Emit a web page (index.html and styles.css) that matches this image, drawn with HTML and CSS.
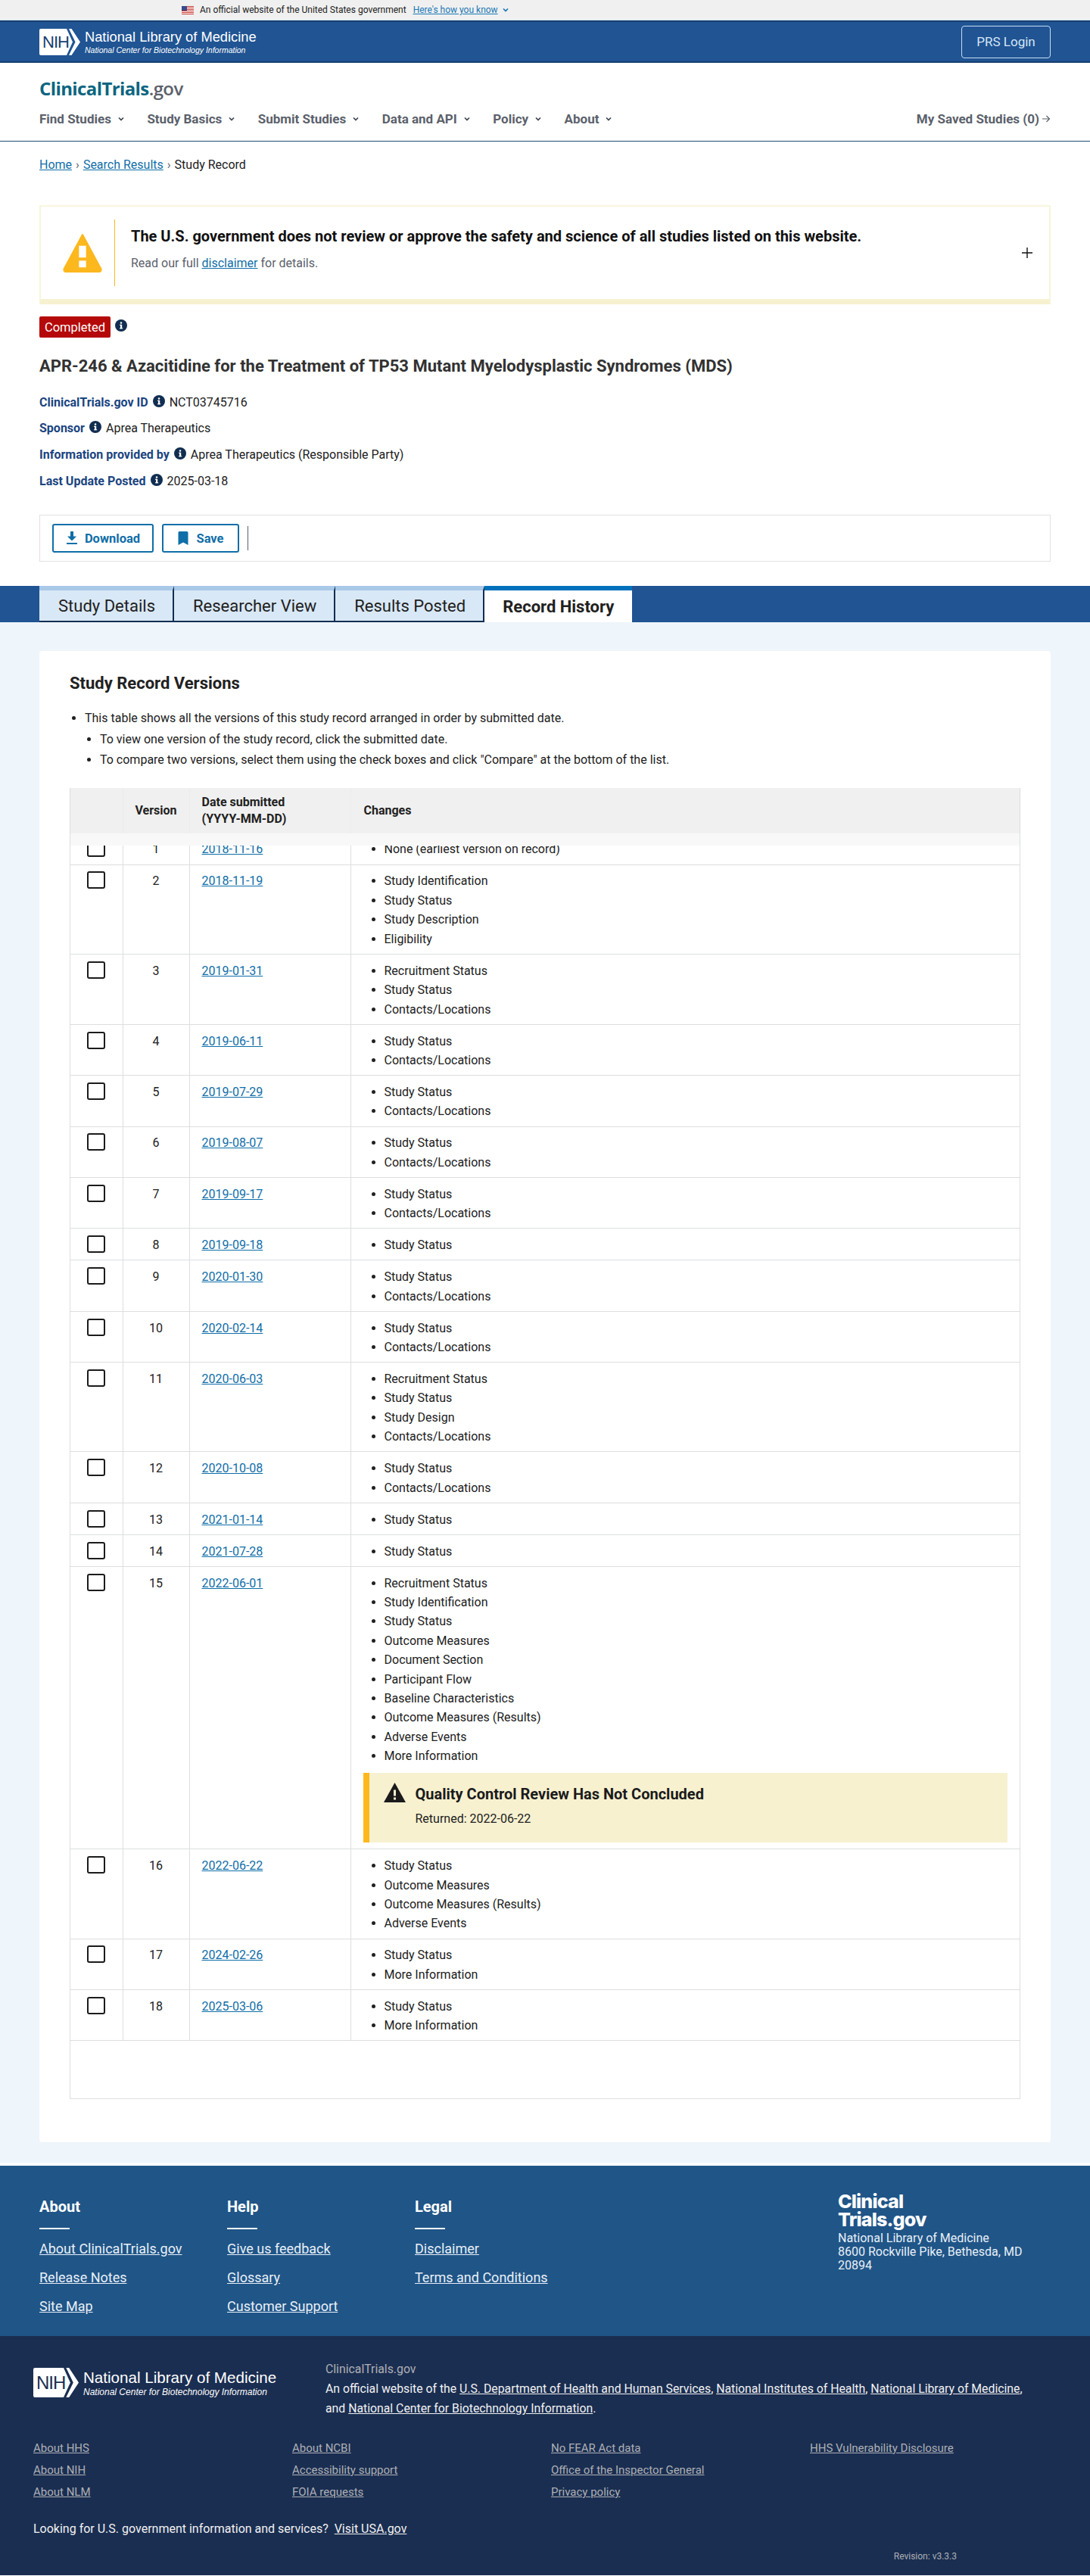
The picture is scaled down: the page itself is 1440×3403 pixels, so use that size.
FILE: index.html
```html
<!DOCTYPE html>
<html lang="en">
<head>
<meta charset="utf-8">
<title>Record History | ClinicalTrials.gov</title>
<link rel="stylesheet" href="styles.css">
</head>
<body>
<svg class="sprite" width="0" height="0" aria-hidden="true">
  <symbol id="info" viewBox="0 0 16 16"><circle cx="8" cy="8" r="8" fill="#112e51"/><rect x="7" y="6.8" width="2.2" height="5.4" fill="#fff"/><rect x="6" y="6.8" width="2" height="1.1" fill="#fff"/><rect x="6" y="11.2" width="4.2" height="1.1" fill="#fff"/><circle cx="8" cy="4.6" r="1.25" fill="#fff"/></symbol>
  <symbol id="chev" viewBox="0 0 10 10"><path d="M2 3.5 5 6.5 8 3.5" fill="none" stroke="currentColor" stroke-width="1.7"/></symbol>
  <symbol id="nih" viewBox="0 0 54 35"><path d="M2 0H36L44 17.5 36 35H2A2 2 0 0 1 0 33V2A2 2 0 0 1 2 0Z" fill="#fff"/><path d="M39 0H42.5L54 17.5 42.5 35H39L47.5 17.5Z" fill="#fff"/></symbol>
</svg>

<div class="gov-banner">
  <svg class="flag" viewBox="0 0 16 11"><rect width="16" height="11" fill="#fff"/><path d="M0 .5H16M0 2.5H16M0 4.5H16M0 6.5H16M0 8.5H16M0 10.5H16" stroke="#c8362e" stroke-width="1"/><rect width="7" height="6" fill="#3c4a8c"/></svg>
  <span class="gov-text">An official website of the United States government</span>
  <a class="gov-link" href="#">Here's how you know</a>
  <svg class="gov-chev"><use href="#chev"/></svg>
</div>

<div class="nih-bar">
  <a class="nih-logo" href="#">
    <span class="nih-mark"><svg class="nih-svg"><use href="#nih"/></svg><span class="nih-letters">NIH</span></span>
    <span class="nih-words"><span class="nih-title">National Library of Medicine</span><span class="nih-sub">National Center for Biotechnology Information</span></span>
  </a>
  <a class="prs" href="#">PRS Login</a>
</div>

<header class="site-head">
  <div class="site-logo"><span class="logo-main">ClinicalTrials</span><span class="logo-gov">.gov</span></div>
  <nav class="site-nav">
    <a class="nav-item" href="#">Find Studies<svg class="nav-chev"><use href="#chev"/></svg></a>
    <a class="nav-item" href="#">Study Basics<svg class="nav-chev"><use href="#chev"/></svg></a>
    <a class="nav-item" href="#">Submit Studies<svg class="nav-chev"><use href="#chev"/></svg></a>
    <a class="nav-item" href="#">Data and API<svg class="nav-chev"><use href="#chev"/></svg></a>
    <a class="nav-item" href="#">Policy<svg class="nav-chev"><use href="#chev"/></svg></a>
    <a class="nav-item" href="#">About<svg class="nav-chev"><use href="#chev"/></svg></a>
    <a class="nav-saved" href="#">My Saved Studies (0)<svg class="arrow" viewBox="0 0 12 12"><path d="M1 6H10.5M6.5 2 10.5 6 6.5 10" fill="none" stroke="currentColor" stroke-width="1.2"/></svg></a>
  </nav>
</header>

<div class="study-top">
  <div class="crumbs"><a href="#">Home</a><span class="sep">›</span><a href="#">Search Results</a><span class="sep">›</span><span>Study Record</span></div>

  <section class="notice">
    <svg class="notice-icon" viewBox="0 0 52 52"><path d="M26 3 49.5 46.5A2.5 2.5 0 0 1 47.500 50H4.500A2.500 2.500 0 0 1 2.500 46.500Z" fill="#fdb81e" stroke="#fdb81e" stroke-width="2" stroke-linejoin="round"/><rect x="21.500" y="17" width="9" height="15" fill="#fff"/><rect x="21.500" y="36" width="9" height="8.500" fill="#fff"/></svg>
    <div class="notice-body">
      <div class="notice-title">The U.S. government does not review or approve the safety and science of all studies listed on this website.</div>
      <div class="notice-sub">Read our full <a href="#">disclaimer</a> for details.</div>
    </div>
    <svg class="plus" viewBox="0 0 14 14"><path d="M7 0V14M0 7H14" stroke="#111" stroke-width="1.4"/></svg>
  </section>

  <div class="status-row"><span class="badge">Completed</span><svg class="info"><use href="#info"/></svg></div>
  <h1 class="study-title">APR-246 &amp; Azacitidine for the Treatment of TP53 Mutant Myelodysplastic Syndromes (MDS)</h1>
  <dl class="meta">
    <div class="meta-row"><dt>ClinicalTrials.gov ID</dt><svg class="info"><use href="#info"/></svg><dd>NCT03745716</dd></div>
    <div class="meta-row"><dt>Sponsor</dt><svg class="info"><use href="#info"/></svg><dd>Aprea Therapeutics</dd></div>
    <div class="meta-row"><dt>Information provided by</dt><svg class="info"><use href="#info"/></svg><dd>Aprea Therapeutics (Responsible Party)</dd></div>
    <div class="meta-row"><dt>Last Update Posted</dt><svg class="info"><use href="#info"/></svg><dd>2025-03-18</dd></div>
  </dl>
  <div class="actions">
    <a class="btn btn-dl" href="#"><svg class="btn-icon" viewBox="0 0 16 18"><path d="M6 0H10V6.500H14L8 12.500 2 6.500H6Z" fill="currentColor"/><rect x="1" y="15" width="14" height="2" fill="currentColor"/></svg>Download</a>
    <a class="btn btn-save" href="#"><svg class="btn-icon" viewBox="0 0 16 18"><path d="M1.500 1.500A1.500 1.500 0 0 1 3 0H13A1.500 1.500 0 0 1 14.500 1.500V18L8 14.500 1.500 18Z" fill="currentColor"/></svg>Save</a>
    <span class="action-sep"></span>
  </div>
</div>

<div class="tabs-band">
  <div class="tabs">
    <a class="tab" href="#">Study Details</a>
    <a class="tab" href="#">Researcher View</a>
    <a class="tab" href="#">Results Posted</a>
    <a class="tab tab-active" href="#">Record History</a>
  </div>
</div>

<main class="main">
  <section class="card">
    <h2 class="card-title">Study Record Versions</h2>
    <ul class="intro">
      <li>This table shows all the versions of this study record arranged in order by submitted date.
        <ul>
          <li>To view one version of the study record, click the submitted date.</li>
          <li>To compare two versions, select them using the check boxes and click "Compare" at the bottom of the list.</li>
        </ul>
      </li>
    </ul>
    <div class="table-wrap">
      <div class="head-strip"></div>
      <table class="versions">
        <colgroup><col class="c-check"><col class="c-ver"><col class="c-date"><col></colgroup>
        <thead><tr><th></th><th class="center">Version</th><th>Date submitted<br>(YYYY-MM-DD)</th><th class="th-changes">Changes</th></tr></thead>
        <tbody>
          <tr><td><span class="check"></span></td><td class="center">1</td><td><a href="#">2018-11-16</a></td><td><ul><li>None (earliest version on record)</li></ul></td></tr>
          <tr><td><span class="check"></span></td><td class="center">2</td><td><a href="#">2018-11-19</a></td><td><ul><li>Study Identification</li><li>Study Status</li><li>Study Description</li><li>Eligibility</li></ul></td></tr>
          <tr><td><span class="check"></span></td><td class="center">3</td><td><a href="#">2019-01-31</a></td><td><ul><li>Recruitment Status</li><li>Study Status</li><li>Contacts/Locations</li></ul></td></tr>
          <tr><td><span class="check"></span></td><td class="center">4</td><td><a href="#">2019-06-11</a></td><td><ul><li>Study Status</li><li>Contacts/Locations</li></ul></td></tr>
          <tr><td><span class="check"></span></td><td class="center">5</td><td><a href="#">2019-07-29</a></td><td><ul><li>Study Status</li><li>Contacts/Locations</li></ul></td></tr>
          <tr><td><span class="check"></span></td><td class="center">6</td><td><a href="#">2019-08-07</a></td><td><ul><li>Study Status</li><li>Contacts/Locations</li></ul></td></tr>
          <tr><td><span class="check"></span></td><td class="center">7</td><td><a href="#">2019-09-17</a></td><td><ul><li>Study Status</li><li>Contacts/Locations</li></ul></td></tr>
          <tr><td><span class="check"></span></td><td class="center">8</td><td><a href="#">2019-09-18</a></td><td><ul><li>Study Status</li></ul></td></tr>
          <tr><td><span class="check"></span></td><td class="center">9</td><td><a href="#">2020-01-30</a></td><td><ul><li>Study Status</li><li>Contacts/Locations</li></ul></td></tr>
          <tr><td><span class="check"></span></td><td class="center">10</td><td><a href="#">2020-02-14</a></td><td><ul><li>Study Status</li><li>Contacts/Locations</li></ul></td></tr>
          <tr><td><span class="check"></span></td><td class="center">11</td><td><a href="#">2020-06-03</a></td><td><ul><li>Recruitment Status</li><li>Study Status</li><li>Study Design</li><li>Contacts/Locations</li></ul></td></tr>
          <tr><td><span class="check"></span></td><td class="center">12</td><td><a href="#">2020-10-08</a></td><td><ul><li>Study Status</li><li>Contacts/Locations</li></ul></td></tr>
          <tr><td><span class="check"></span></td><td class="center">13</td><td><a href="#">2021-01-14</a></td><td><ul><li>Study Status</li></ul></td></tr>
          <tr><td><span class="check"></span></td><td class="center">14</td><td><a href="#">2021-07-28</a></td><td><ul><li>Study Status</li></ul></td></tr>
          <tr><td><span class="check"></span></td><td class="center">15</td><td><a href="#">2022-06-01</a></td><td>
            <ul><li>Recruitment Status</li><li>Study Identification</li><li>Study Status</li><li>Outcome Measures</li><li>Document Section</li><li>Participant Flow</li><li>Baseline Characteristics</li><li>Outcome Measures (Results)</li><li>Adverse Events</li><li>More Information</li></ul>
            <div class="qc">
              <svg class="qc-icon" viewBox="0 0 29 26"><path d="M14.500 0 29 26H0Z" fill="#1b1b1b"/><rect x="13" y="9.500" width="3" height="8" fill="#f7f1d0"/><rect x="13" y="19.500" width="3" height="3" fill="#f7f1d0"/></svg>
              <div><div class="qc-title">Quality Control Review Has Not Concluded</div><div class="qc-sub">Returned: 2022-06-22</div></div>
            </div>
          </td></tr>
          <tr><td><span class="check"></span></td><td class="center">16</td><td><a href="#">2022-06-22</a></td><td><ul><li>Study Status</li><li>Outcome Measures</li><li>Outcome Measures (Results)</li><li>Adverse Events</li></ul></td></tr>
          <tr><td><span class="check"></span></td><td class="center">17</td><td><a href="#">2024-02-26</a></td><td><ul><li>Study Status</li><li>More Information</li></ul></td></tr>
          <tr><td><span class="check"></span></td><td class="center">18</td><td><a href="#">2025-03-06</a></td><td><ul><li>Study Status</li><li>More Information</li></ul></td></tr>
        </tbody>
      </table>
    </div>
  </section>
</main>

<footer>
  <div class="foot-top">
    <div class="foot-col"><h3>About</h3><a href="#">About ClinicalTrials.gov</a><a href="#">Release Notes</a><a href="#">Site Map</a></div>
    <div class="foot-col"><h3>Help</h3><a href="#">Give us feedback</a><a href="#">Glossary</a><a href="#">Customer Support</a></div>
    <div class="foot-col"><h3>Legal</h3><a href="#">Disclaimer</a><a href="#">Terms and Conditions</a></div>
    <div class="foot-brand">
      <div class="foot-logo">Clinical<br>Trials.gov</div>
      <address>National Library of Medicine<br>8600 Rockville Pike, Bethesda, MD<br>20894</address>
    </div>
  </div>
  <div class="foot-dark">
    <div class="foot-id">
      <a class="nih-logo nih-logo-lg" href="#">
        <span class="nih-mark"><svg class="nih-svg"><use href="#nih"/></svg><span class="nih-letters">NIH</span></span>
        <span class="nih-words"><span class="nih-title">National Library of Medicine</span><span class="nih-sub">National Center for Biotechnology Information</span></span>
      </a>
      <div class="foot-official">
        <div class="foot-name">ClinicalTrials.gov</div>
        An official website of the <a href="#">U.S. Department of Health and Human Services</a>, <a href="#">National Institutes of Health</a>, <a href="#">National Library of Medicine</a>, and <a href="#">National Center for Biotechnology Information</a>.
      </div>
    </div>
    <div class="foot-links">
      <a href="#">About HHS</a><a href="#">About NCBI</a><a href="#">No FEAR Act data</a><a href="#">HHS Vulnerability Disclosure</a>
      <a href="#">About NIH</a><a href="#">Accessibility support</a><a href="#">Office of the Inspector General</a><span></span>
      <a href="#">About NLM</a><a href="#">FOIA requests</a><a href="#">Privacy policy</a><span></span>
    </div>
    <div class="foot-usa">Looking for U.S. government information and services?&nbsp; <a href="#">Visit USA.gov</a></div>
    <div class="foot-rev">Revision: v3.3.3</div>
  </div>
</footer>
</body>
</html>
```
FILE: styles.css
```css
* { box-sizing: border-box; }
html, body { margin: 0; padding: 0; }
body { font-family: Roboto, "Liberation Sans", sans-serif; font-size: 16px; color: #212121; background: #fff; }
a { color: #0f6ea8; }
.sprite { position: absolute; }

.gov-banner { height: 27px; background: #f0f0f0; border-bottom: 1px solid #cfe2f0; display: flex; align-items: center; padding-left: 240px; font-size: 12px; color: #212121; }
.flag { width: 16px; height: 11px; margin-right: 8px; }
.gov-link { margin-left: 9px; color: #1a78b5; }
.gov-chev { width: 10px; height: 10px; margin-left: 5px; color: #1a78b5; }

.nih-bar { height: 56px; background: #205493; border-top: 2px solid #173f70; border-bottom: 2px solid #173f70; display: flex; align-items: center; justify-content: space-between; padding: 0 52px; }
.nih-logo { display: flex; align-items: center; text-decoration: none; color: #fff; }
.nih-mark { position: relative; display: block; width: 54px; height: 35px; }
.nih-svg { display: block; width: 100%; height: 100%; }
.nih-letters { position: absolute; left: 4px; top: 0; line-height: 35px; font-family: "Liberation Sans", sans-serif; font-size: 22px; letter-spacing: -1px; color: #173f70; }
.nih-words { display: flex; flex-direction: column; margin-left: 6px; font-family: "Liberation Sans", sans-serif; }
.nih-title { font-size: 18.300px; line-height: 22px; }
.nih-sub { font-size: 10.500px; line-height: 12px; font-style: italic; }
.prs { width: 118px; height: 43px; border: 1px solid #c6dcf2; border-radius: 4px; display: flex; align-items: center; justify-content: center; color: #d5e6f7; text-decoration: none; font-size: 17px; }

.site-head { padding: 20px 52px 17px; border-bottom: 1px solid #1f4a6f; }
.site-logo { height: 28px; line-height: 28px; font-family: "Open Sans", sans-serif; font-size: 24px; font-weight: 700; letter-spacing: -.6px; }
.logo-main { color: #0b6580; }
.logo-gov { color: #5b616b; font-weight: 600; }
.site-nav { display: flex; align-items: center; height: 24px; margin-top: 14px; }
.nav-item { display: flex; align-items: center; margin-right: 29.500px; color: #5b616b; font-weight: 700; text-decoration: none; font-size: 17px; }
.nav-chev { width: 10px; height: 10px; margin-left: 8px; color: #3d4551; }
.nav-saved { margin-left: auto; display: flex; align-items: center; color: #5b616b; font-weight: 700; font-size: 17px; text-decoration: none; }
.arrow { width: 12px; height: 12px; margin-left: 3px; }

.study-top { padding: 19px 52px 32px; }
.crumbs { line-height: 24px; font-size: 16px; }
.sep { margin: 0 5px; color: #5b616b; }

.notice { display: flex; align-items: center; height: 131px; margin-top: 41px; border: 2px solid #f9f5dc; border-bottom: 7px solid #f7f1d0; padding: 0 22px 0 28px; }
.notice-icon { width: 54px; height: 54px; flex: none; }
.notice-body { flex: 1; margin-left: 15px; border-left: 1px solid #fdb81e; height: 88px; padding-left: 21px; padding-top: 7px; }
.notice-title { font-size: 20px; font-weight: 700; line-height: 30px; color: #111; }
.notice-sub { margin-top: 9px; line-height: 24px; color: #5b616b; }
.plus { width: 14px; height: 14px; flex: none; }

.status-row { display: flex; align-items: center; margin-top: 16px; height: 28px; }
.badge { background: #b50909; color: #fff; height: 28px; width: 94px; border-radius: 2px; display: flex; align-items: center; justify-content: center; font-size: 16.500px; }
.info { width: 16px; height: 16px; flex: none; }
.status-row .info { margin-left: 6px; margin-top: -4px; }
.study-title { margin: 23px 0 0; font-size: 22px; line-height: 30px; font-weight: 700; color: #323232; }
.meta { margin: 20px 0 0; display: flex; flex-direction: column; gap: 10.800px; }
.meta-row { display: flex; align-items: center; height: 24px; }
.meta-row dt { font-weight: 700; color: #1a4480; }
.meta-row .info { margin: -3px 6px 0 6px; }
.meta-row dd { margin: 0; }

.actions { display: flex; align-items: center; height: 62px; margin-top: 32.800px; border: 1px solid #e4e2e0; padding-left: 16px; }
.btn { display: flex; align-items: center; justify-content: center; height: 38px; border: 2px solid #0f6ea8; border-radius: 3px; color: #0f6ea8; font-weight: 700; text-decoration: none; font-size: 16.500px; }
.btn-dl { width: 134px; }
.btn-save { width: 102px; margin-left: 11px; }
.btn-icon { width: 16px; height: 18px; margin-right: 9px; }
.action-sep { width: 1px; height: 32px; background: #5b616b; margin-left: 11px; }

.tabs-band { height: 48px; background: #205493; padding-left: 52px; }
.tabs { display: flex; height: 48px; }
.tab { display: flex; align-items: center; padding: 1px 23px 0 25px; background: #d9e8f6; border-top: 6px solid #a9c9e9; border-bottom: 2px solid #112e51; border-right: 2px solid #112e51; color: #212121; font-size: 22px; text-decoration: none; }
.tab-active { background: #fff; border-top-color: #0071bc; border-bottom: 0; border-right: 0; padding-left: 24px; padding-right: 24px; font-weight: 700; }

.main { background: #eef5fb; padding: 38px 52px 27px; }
.card { background: #fff; padding: 28px 40px 57px; border-radius: 4px; }
.card-title { margin: 0; font-size: 22px; line-height: 30px; font-weight: 700; color: #212121; }
.intro { margin: 17px 0 23px; padding-left: 20px; line-height: 27.500px; }
.intro ul { margin: 0; padding-left: 20px; list-style: disc; }

.table-wrap { position: relative; border-left: 1px solid #dcdee0; border-right: 1px solid #dcdee0; border-bottom: 1px solid #dcdee0; padding-bottom: 76px; }
.head-strip { position: absolute; left: 0; right: 0; top: 60px; height: 16px; background: #f8f8f8; z-index: 1; }
.versions { width: 100%; border-collapse: collapse; table-layout: fixed; }
.c-check { width: 69px; }
.c-ver { width: 88px; }
.c-date { width: 213px; }
.versions th { height: 60px; background: #f0f0f0; text-align: left; padding: 0 16px; line-height: 22px; font-weight: 700; border-right: 1px solid #ececec; color: #212121; }
.versions th.center { text-align: center; padding: 0; }
.versions th.th-changes { padding-left: 17px; border-right: 0; }
.versions td { vertical-align: top; padding: 8.800px 16px 6.800px; line-height: 25.400px; border-right: 1px solid #dcdee0; border-bottom: 1px solid #dcdee0; }
.versions td:first-child { padding-left: 22px; padding-right: 0; }
.versions td.center { text-align: center; padding-left: 0; padding-right: 0; }
.versions td:last-child { border-right: 0; }
.versions ul { margin: 0; padding-left: 28px; }
.check { display: block; width: 24px; height: 23px; border: 2px solid #1b1b1b; border-radius: 3px; background: #fff; }

.qc { display: flex; margin: 9px 0 2px; height: 92px; background: #f7f1d0; border-left: 8px solid #fdb81e; padding: 13px 0 0 19px; }
.qc-icon { width: 29px; height: 26px; flex: none; }
.qc-title { margin-left: 13px; font-size: 20px; line-height: 30px; font-weight: 700; color: #1b1b1b; }
.qc-sub { margin: 5px 0 0 13px; line-height: 26px; }

footer { border-top: 4px solid #fff; }
.foot-top { height: 225px; background: #205587; color: #fff; display: flex; padding: 35px 52px 0; }
.foot-col { display: flex; flex-direction: column; align-items: flex-start; width: 248px; padding-top: 7px; }
.foot-col:nth-child(3) { width: 559px; }
.foot-col h3 { margin: 0 0 14px; font-size: 20px; line-height: 24px; font-weight: 700; padding-bottom: 6px; position: relative; height: 42px; }
.foot-col h3::after { content: ""; position: absolute; left: 0; bottom: 0; width: 40px; height: 2px; background: #fff; }
.foot-col a { color: #e8f0f8; font-size: 18px; line-height: 24px; margin-bottom: 14px; }
.foot-logo { font-family: Inter, sans-serif; font-weight: 800; font-size: 25px; line-height: 24px; letter-spacing: -.8px; }
.foot-brand address { margin-top: 4px; font-style: normal; line-height: 18px; font-size: 16px; color: #e8f0f8; }

.foot-dark { height: 316px; background: #1a2e51; padding: 31px 176px 0 44px; color: #f1f1f1; }
.foot-id { display: flex; }
.nih-logo-lg { width: 386px; height: 50px; margin-top: 11px; align-items: flex-start; flex: none; }
.nih-logo-lg .nih-mark { width: 60px; height: 39px; }
.nih-logo-lg .nih-letters { font-size: 24px; line-height: 39px; color: #1a2e51; }
.nih-logo-lg .nih-title { font-size: 20.600px; line-height: 26px; }
.nih-logo-lg .nih-sub { font-size: 12px; line-height: 13px; }
.foot-official { width: 950px; flex: none; line-height: 26px; font-size: 15.800px; }
.foot-official a { color: #f1f1f1; }
.foot-name { color: #aeb0b5; }
.foot-links { display: grid; grid-template-columns: repeat(4, 342px); grid-auto-rows: 29px; margin-top: 24px; align-items: center; font-size: 15px; }
.foot-links a { color: #aeb0b5; }
.foot-usa { margin-top: 23px; line-height: 24px; }
.foot-usa a { color: #f1f1f1; }
.foot-rev { margin-top: 16px; line-height: 16px; font-size: 12px; color: #aeb0b5; text-align: right; }
```
